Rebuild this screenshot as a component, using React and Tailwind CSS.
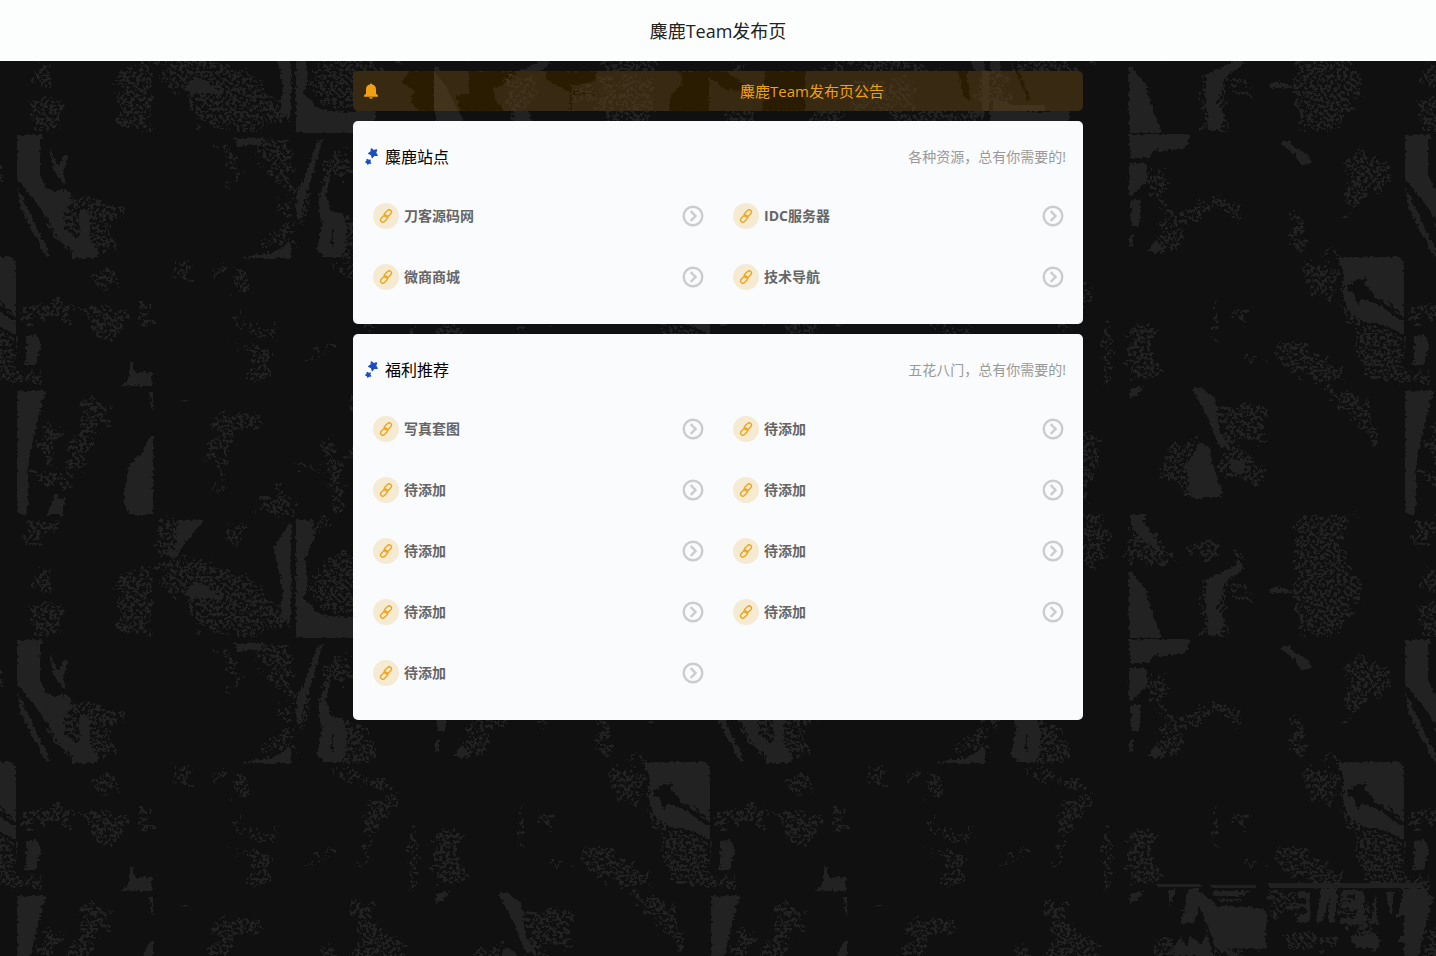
import React from "react";

const sections = [
  {
    title: "麋鹿站点",
    tip: "各种资源，总有你需要的!",
    links: ["刀客源码网", "IDC服务器", "微商商城", "技术导航"],
  },
  {
    title: "福利推荐",
    tip: "五花八门，总有你需要的!",
    links: [
      "写真套图",
      "待添加",
      "待添加",
      "待添加",
      "待添加",
      "待添加",
      "待添加",
      "待添加",
      "待添加",
    ],
  },
];

// flat grey areas of the wallpaper
const solidShapes = [
  "M17 136L20 135 43 135 40 142 40 173 45 187 53 191 70 191 72 200 64 213 64 228 72 236 80 238 79 212 90 212 90 235 97 250 98 258 72 258 72 250 60 242 48 218 30 195 17 178Z",
  "M17 187L24 200 50 256 46 256 30 226 20 206Z",
  "M51 150L56 163 60 165 64 155 68 155 63 175 66 186 58 176 52 165Z",
  "M234 138L265 138 258 144 238 147Z",
  "M238 258L275 252 291 243 291 258Z",
  "M325 137L316 143 306 175 297 192 297 222 305 200 312 175 321 145Z",
  "M321 190L330 174 326 195 331 210 344 215 347 230 345 252 340 258 324 258 317 250 322 225 318 205ZM331 228L331 248 333 248 333 228Z",
  "M26 336L38 336 41 345 36 365 26 365Z",
  "M130 360L133 362 134 373 152 372 152 386 120 386 129 380Z",
  "M643 257L706 257 710 261 710 335 690 325 670 322 655 312 648 295 650 275ZM652 287L665 279 672 278 670 285 684 298 710 317 710 322 685 305 668 298 664 305 660 294ZM693 300L700 306 710 318 702 313Z",
  "M17 393L20 391 46 391 40 410 33 440 27 470 29 480 27 515 17 514Z",
  "M55 495L65 500 63 515 47 515Z",
  "M151 435L153 435 153 515 130 515 124 505 124 490 130 465 142 452Z",
  "M149 392L153 392 153 411Z",
  "M436 389L450 386 442 397 436 398Z",
  "M498 387L508 388 522 400 525 430 533 443 540 452 524 445 515 420Z",
  "M505 443L515 446 519 465 528 490 527 497 497 498 493 465Z",
  "M538 458L548 462 552 472 545 475 535 468Z",
  "M178 520L204 520 180 550 175 558 160 553 175 550Z",
  "M195 580L212 590 222 600 185 595Z",
  "M291 521L291 622 280 618 283 590 274 548Z",
  "M296 520L312 520 315 535 305 560 308 585 304 598 320 615 352 617 375 608 375 638 296 638Z",
  "M436 515L452 514 450 522 462 540 468 555 455 545 438 530Z",
  "M435 570L442 578 452 590 457 610 468 638 435 638Z",
  "M435 134L496 134 495 143 488 149 460 150 455 158 436 158Z",
  "M435 163L453 163 453 180 440 195 435 195Z",
  "M436 200L447 200 445 225 438 228Z",
  "M435 236L440 235 437 250Z",
  "M463 240L471 252 453 252Z",
  "M512 580L538 567 546 560 550 568 530 583 528 598 522 606 530 620 526 635 514 635 512 610Z",
  "M586 143L595 140 600 147 612 153 618 162 608 166 598 151Z",
  "M575 590L585 586 598 591 598 593 575 593Z",
];

// areas that only show as coarse dots
const grainShapes = [
  "M72 192L98 200 118 202 120 212 110 225 110 250 98 256 70 256 45 220 40 190Z",
  "M255 138L291 140 291 192 270 172 255 150Z",
  "M218 143L230 148 240 170 236 182 228 190 234 172Z",
  "M262 242L285 225 291 225 291 250ZM275 200L291 202 291 220 278 215Z",
  "M297 190L312 190 306 215 297 222Z",
  "M322 165L335 155 350 150 352 178 335 176 322 190ZM345 215L362 220 378 243 372 258 345 258 340 225Z",
  "M18 308L60 300 72 302 72 320 65 325 60 315 20 322Z",
  "M92 280L105 265 118 275 118 287 100 288ZM78 305L110 308 127 315 127 328 110 342 100 335 88 320Z",
  "M140 305L151 305 151 325 138 328ZM15 373L45 373 45 385 5 382ZM16 336L16 380 0 380 0 336Z",
  "M176 263L192 263 188 282 178 275ZM212 278L220 264 228 264 220 277ZM235 265L248 275 248 290 235 293Z",
  "M246 307L236 318 242 326 255 325 265 333 278 322 272 336 255 333 236 325ZM230 344L238 348 268 346 270 382 245 382 255 365 250 350Z",
  "M306 362L330 343 332 347 310 361Z",
  "M328 263L350 266 390 280 388 287 365 280 345 275Z",
  "M375 295L400 285 392 305 370 328 364 330 364 302ZM368 335L372 340 360 362 357 360ZM410 318L415 320 417 385 411 385Z",
  "M435 325L465 327 455 345 466 372 440 380 435 378Z",
  "M542 308L555 312 552 325 540 320ZM520 305L523 305 523 345 520 345ZM550 358L570 358 570 360 550 360Z",
  "M580 345L605 340 620 355 645 365 650 382 620 382 595 368Z",
  "M606 263L640 265 645 297 620 295 608 275Z",
  "M665 322L708 335 710 380 690 380 675 378 665 350ZM646 300L665 320 680 330 660 325Z",
  "M45 425L62 430 55 445 50 455 58 468 45 460 40 445Z",
  "M80 405L92 392 95 402 110 405 108 420 90 435 82 475 70 475 68 450 80 430ZM28 468L60 475 78 487 45 487Z",
  "M218 415L258 413 262 425 232 432 225 470 218 495 220 445 204 467 215 430Z",
  "M174 405L190 401 190 403 175 406ZM254 514L258 500 280 488 291 495 291 514Z",
  "M325 435L332 445 342 470 342 510 335 510 326 465ZM347 400L375 395 372 415 395 437 406 436 403 465 392 505 388 470 345 455 362 432Z",
  "M296 462L320 466 318 470 298 466Z",
  "M523 406L570 404 570 442 530 440ZM462 470L480 445 503 438 497 495 475 482ZM525 450L545 448 570 468 570 485 545 478 530 475Z",
  "M630 390L665 394 682 430 683 448 660 420Z",
  "M26 521L60 521 38 545 28 545ZM33 575L52 568 50 592 34 585ZM30 605L64 605 60 635 35 635Z",
  "M118 577L130 573 151 567 151 635 120 635 117 600Z",
  "M157 520L178 520 176 556 158 553ZM157 560L200 560 250 578 270 603 290 618 290 625 240 635 200 630 185 600 165 590Z",
  "M228 525L247 522 245 540 228 545ZM312 520L330 520 318 535Z",
  "M326 560L340 550 354 555 378 565 378 600 345 615 325 608 308 590Z",
  "M390 515L412 520 416 540 400 570 390 570Z",
  "M435 530L455 535 482 560 470 565 435 560Z",
  "M450 175L470 170 472 185 468 200 480 215 525 195 545 210 540 218 520 206 500 225 470 228 465 200Z",
  "M466 230L488 230 488 247 472 252 455 250Z",
  "M508 580L530 580 532 635 508 635ZM535 583L557 595 557 603 540 596ZM537 545L550 560 545 568ZM492 545L520 536 525 556 512 565Z",
  "M603 515L660 515 648 535 650 560 665 580 665 600 645 625 640 637 612 637 600 600Z",
  "M652 155L670 150 690 165 697 185 670 195 652 220 655 180 650 165ZM600 210L612 228 610 252 592 245ZM630 250L645 250 640 256Z",
];

function Wallpaper() {
  return (
    <svg
      className="absolute inset-0 -z-10 h-full w-full"
      aria-hidden="true"
      shapeRendering="crispEdges"
    >
      <defs>
        <filter id="rough" x="0" y="0" width="100%" height="100%">
          <feTurbulence
            type="fractalNoise"
            baseFrequency="0.3"
            numOctaves="2"
            seed="3"
            result="noise"
          />
          <feDisplacementMap
            in="SourceGraphic"
            in2="noise"
            scale="6"
            xChannelSelector="R"
            yChannelSelector="G"
          />
        </filter>
        <filter id="grain" x="0" y="0" width="100%" height="100%">
          <feTurbulence
            type="fractalNoise"
            baseFrequency="0.1"
            numOctaves="3"
            seed="5"
            result="waves"
          />
          <feDisplacementMap
            in="SourceGraphic"
            in2="waves"
            scale="22"
            xChannelSelector="R"
            yChannelSelector="G"
            result="area"
          />
          <feTurbulence
            type="fractalNoise"
            baseFrequency="0.3"
            numOctaves="3"
            seed="7"
          />
          <feColorMatrix
            values="0 0 0 0 0  0 0 0 0 0  0 0 0 0 0  24 0 0 0 -11.9"
            result="dots"
          />
          <feComposite in="area" in2="dots" operator="in" />
        </filter>
        <pattern
          id="collage"
          patternUnits="userSpaceOnUse"
          x="16"
          y="134"
          width="694"
          height="505"
          viewBox="16 134 694 505"
        >
          <g fill="#212121" fillRule="evenodd" filter="url(#rough)">
            {solidShapes.map((d) => (
              <path key={d} d={d} />
            ))}
          </g>
          <g fill="#212121" filter="url(#grain)">
            {grainShapes.map((d) => (
              <path key={d} d={d} />
            ))}
          </g>
        </pattern>
      </defs>
      <rect width="100%" height="100%" fill="#101010" />
      <rect width="100%" height="100%" fill="url(#collage)" />
      {/* row of shelves in the lower right */}
      <g fill="#212121">
        <path d="M1156 884H1200L1202 887H1158ZM1209 885H1256V888H1212ZM1268 883H1422V888H1270Z" />
        <g filter="url(#rough)">
          <path d="M1167 890H1175L1170 908ZM1188 888H1198L1204 900 1216 906 1252 907 1266 910V948H1216L1206 922 1200 904 1194 923H1181Z" />
          <path d="M1212 891H1252L1240 896H1214ZM1218 899H1240V901H1218Z" />
          <path d="M1298 892H1310V922H1296L1298 916 1306 914V908H1298V904H1306V898H1298ZM1321 888H1338L1334 922H1328L1330 895 1322 922H1316ZM1342 890H1364V924H1340V918H1354L1358 908H1342V903H1354V894H1348L1342 904Z" />
          <path d="M1375 890L1378 924H1371ZM1386 892H1394L1391 918ZM1402 888H1428L1422 930 1416 956H1404V915L1396 918 1402 900Z" />
          <path d="M1180 936L1186 948 1190 935 1200 946 1206 934 1214 956H1172ZM1352 935H1378L1380 948H1356L1352 942ZM1400 936H1404V942H1398Z" />
        </g>
        <path
          filter="url(#grain)"
          d="M1268 890H1296V915H1270ZM1154 938H1178V956H1154ZM1214 930H1244V956H1214ZM1286 934H1334V948H1286ZM1428 930H1436V956H1428ZM1350 922H1370V936H1350Z"
        />
      </g>
    </svg>
  );
}

function NoticeTexture() {
  return (
    <svg
      className="absolute inset-0 -z-10 h-full w-full"
      viewBox="0 0 730 40"
      preserveAspectRatio="xMidYMid slice"
      aria-hidden="true"
    >
      <g fill="#2b1c04" filter="url(#rough)">
        <path d="M56 0H81V40H65L56 28 63 22 49 11Z" />
        <path d="M116 0H165L158 8 140 18 144 32 151 40H107L103 25 116 22Z" />
        <path d="M193 0H244L242 10 219 15V20L242 21V24H219V40H217V22L193 8Z" />
        <path d="M326 0H356L372 0 391 12V20L372 18 356 6V40H317V25L330 12Z" />
        <path d="M412 0H452V40H409Z" />
        <path d="M605 0H614L617 31 611 25ZM663 0H666L678 30 674 28Z" />
      </g>
      <g fill="#41331c">
        <path d="M81 0L93 15 105 40H81Z" />
        <path
          filter="url(#grain)"
          d="M150 4H184L176 40H152ZM219 14H240V30H219ZM246 8H300V40H246ZM500 10H560V40H500ZM625 0H650L660 36H620Z"
        />
        <path d="M629 0H636V40H629ZM640 26L660 34H692V40H640Z" />
      </g>
    </svg>
  );
}

function BellIcon() {
  return (
    <svg viewBox="0 0 16 16" className="h-4 w-4 shrink-0" fill="#f0a010">
      <path d="M8 .5c.7 0 1.100.5 1.200 1.100C11.700 2.100 13 4 13 6.400v4.100l2 2v1.300H1v-1.300l2-2V6.400C3 4 4.300 2.100 6.800 1.600 6.900 1 7.300.5 8 .5ZM6 14.200h4c-.2.900-1 1.500-2 1.500s-1.800-.6-2-1.500Z" />
    </svg>
  );
}

function StarsIcon() {
  return (
    <svg
      viewBox="0 0 14 18"
      className="h-[18px] w-3.5"
      fill="#1a4cc4"
      stroke="#1a4cc4"
      strokeWidth="1.200"
      strokeLinejoin="round"
    >
      <path
        transform="rotate(12 8.200 5)"
        d="M8.200 9.800L6.800 6.900 3.800 6.400 5.900 4.300 5.500 1.300 8.200 2.600 10.900 1.300 10.500 4.300 12.600 6.400 9.600 6.900Z"
      />
      <path
        transform="rotate(12 3.300 13.700)"
        d="M3.300 16.200L2.400 14.900.9 14.600 1.900 13.200 1.700 11.700 3.300 12.200 4.900 11.700 4.700 13.200 5.800 14.600 4.200 14.900Z"
      />
    </svg>
  );
}

function ChainIcon() {
  return (
    <svg
      viewBox="0 0 16 16"
      className="h-3.5 w-3.5"
      fill="none"
      stroke="#efa41c"
      strokeWidth="1.500"
    >
      <g transform="rotate(-45 8 8)">
        <rect x="-.3" y="6" width="9.300" height="5.200" rx="2.600" />
        <rect x="7" y="4.800" width="9.300" height="5.200" rx="2.600" />
      </g>
    </svg>
  );
}

function ArrowIcon() {
  return (
    <svg
      viewBox="0 0 22 22"
      className="h-[22px] w-[22px]"
      fill="none"
      stroke="#ccc"
      strokeWidth="2.400"
    >
      <circle cx="11" cy="11" r="9.300" />
      <path d="M8.700 6.200l4.800 4.800-4.800 4.800" />
    </svg>
  );
}

function LinkItem({ name }) {
  return (
    <a href="#" className="flex h-[61px] items-center pr-3.5 pl-[15px]">
      <span className="flex h-[26px] w-[26px] items-center justify-center rounded-full bg-[#f5ead2]">
        <ChainIcon />
      </span>
      <span className="ml-[5px] flex-1 text-sm font-bold text-[#666]">
        {name}
      </span>
      <ArrowIcon />
    </a>
  );
}

function Section({ title, tip, links }) {
  return (
    <section className="mt-2.5 rounded-[5px] bg-[#fafbfd] px-[5px] pt-3 pb-[17px]">
      <div className="mb-1 flex h-12 items-center justify-between pr-3 pl-[7px]">
        <h2 className="flex items-center gap-1.5 text-base text-black">
          <StarsIcon />
          {title}
        </h2>
        <span className="text-sm text-[#999]">{tip}</span>
      </div>
      <div className="grid grid-cols-2">
        {links.map((name, index) => (
          <LinkItem key={index} name={name} />
        ))}
      </div>
    </section>
  );
}

function App() {
  return (
    <div className="relative isolate min-h-screen font-['Open_Sans','Noto_Sans_CJK_SC',sans-serif]">
      <Wallpaper />
      <header className="flex h-[61px] items-center justify-center bg-[#fcfdfd]">
        <h1 className="text-lg text-[#222]">麋鹿Team发布页</h1>
      </header>

      <main className="mx-auto max-w-[730px] pt-2.5 pb-10">
        <div className="relative isolate flex h-10 items-center overflow-hidden rounded-[5px] bg-[#382912] px-2.5">
          <NoticeTexture />
          <BellIcon />
          <p className="ml-1.5 flex-1 pl-[50%] text-[15px] whitespace-nowrap text-[#f0a010]">
            麋鹿Team发布页公告
          </p>
        </div>

        {sections.map((section) => (
          <Section key={section.title} {...section} />
        ))}
      </main>
    </div>
  );
}

export default App;
